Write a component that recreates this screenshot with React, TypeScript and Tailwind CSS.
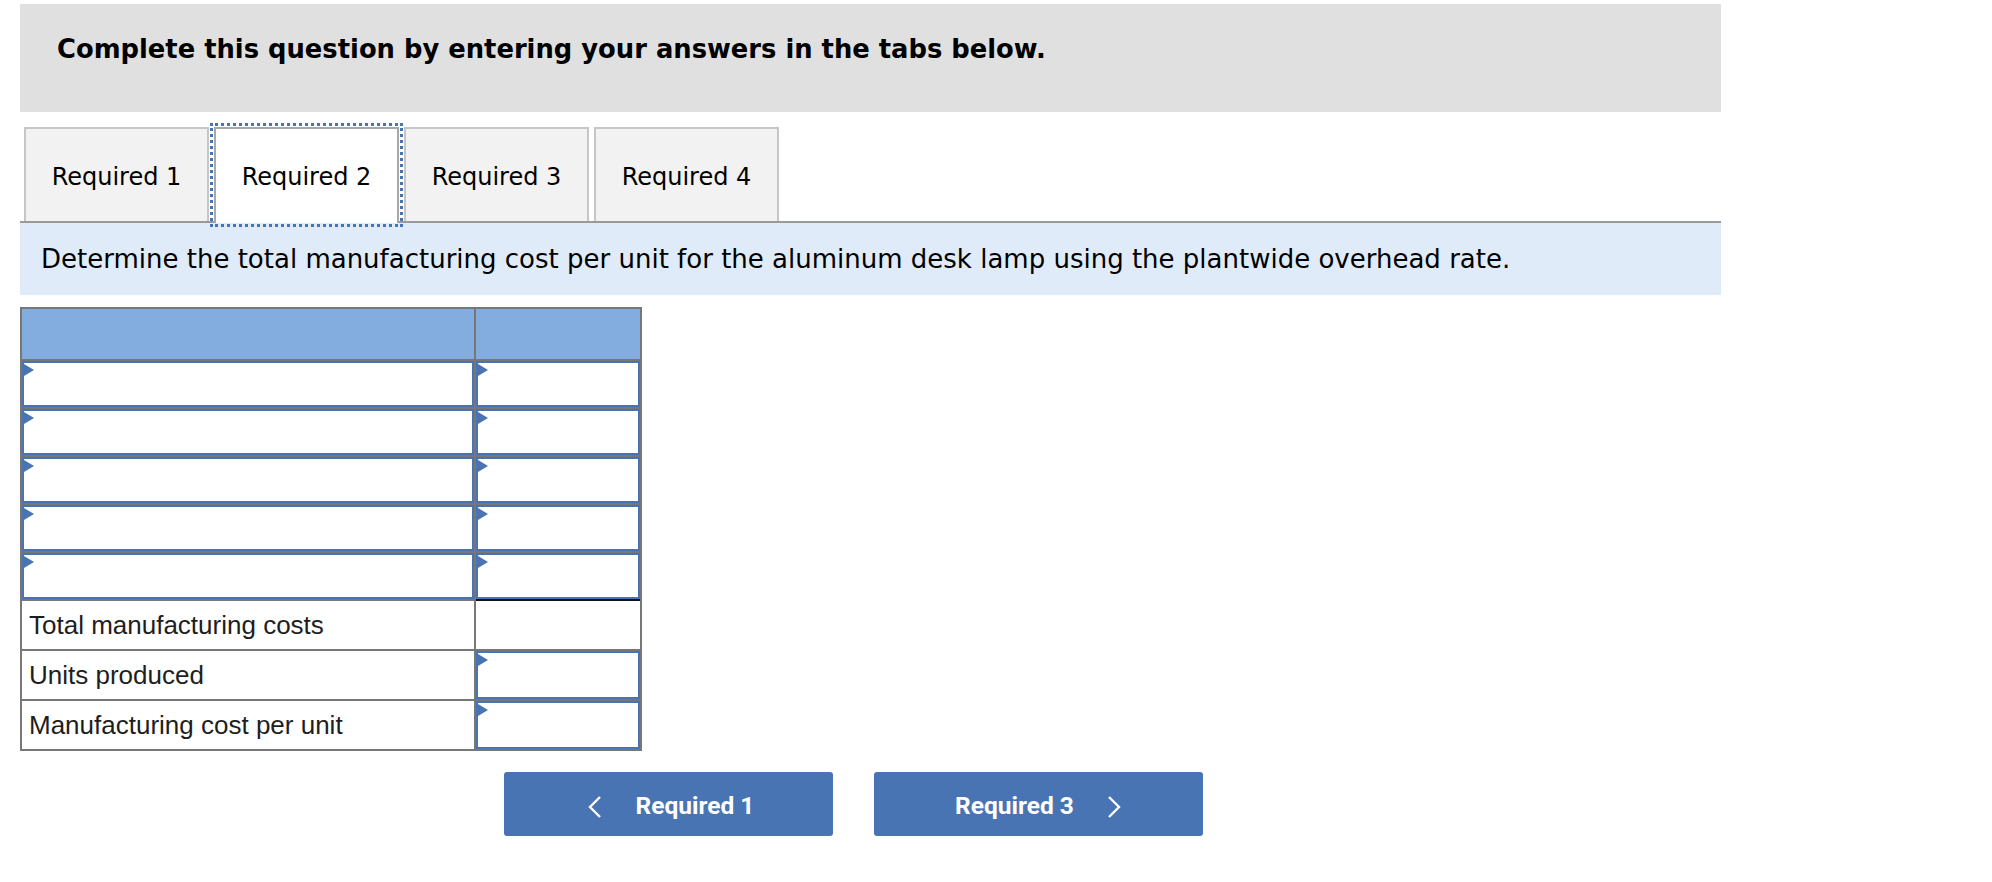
import React from 'react';

const verdana = { fontFamily: '"DejaVu Sans", Verdana, sans-serif' };

// blue input box with the small flag marker at the top-left
const InputBox = () => (
  <div className="relative h-full w-full border-2 border-[#4874B4] bg-white">
    <svg className="absolute left-0 top-[1px]" width="10" height="12" viewBox="0 0 10 12">
      <polygon points="0,0 10,6 0,12" fill="#4874B4" />
    </svg>
  </div>
);

const Tab = ({ label, active }: { label: string; active?: boolean }) => (
  <div
    className={
      active
        ? 'relative z-10 -mb-[2px] flex h-[96px] w-[185px] items-center justify-center border-x-2 border-t-2 border-[#A8A8A8] bg-white pt-[2px] text-[24px] text-black outline-[3px] outline-dotted outline-[#4874B4] outline-offset-[1px]'
        : 'flex h-[94px] w-[185px] items-center justify-center border-x-2 border-t-2 border-[#C6C6C6] bg-[#F2F2F2] pt-[4px] text-[24px] text-black'
    }
  >
    {label}
  </div>
);

const inputRows = [0, 1, 2, 3, 4];
const textRows = ['Total manufacturing costs', 'Units produced', 'Manufacturing cost per unit'];

export default function App() {
  return (
    <div className="min-h-screen bg-white" style={verdana}>
      <div className="w-[1721px] pl-[20px] pt-[4px]">
        {/* instructions */}
        <div className="h-[108px] bg-[#E0E0E0] pl-[37px] pt-[31px]">
          <p className="text-[25.8px] font-bold leading-[28px] text-black">
            Complete this question by entering your answers in the tabs below.
          </p>
        </div>

        {/* tabs */}
        <div className="mt-[15px] flex items-end gap-[5px] border-b-2 border-[#9A9A9A] pl-[4px]">
          <Tab label="Required 1" />
          <Tab label="Required 2" active />
          <Tab label="Required 3" />
          <Tab label="Required 4" />
        </div>

        {/* prompt */}
        <div className="flex h-[72px] items-center bg-[#DFEBF8] pl-[21px]">
          <p className="text-[26px] text-black">
            Determine the total manufacturing cost per unit for the aluminum desk lamp using the plantwide overhead rate.
          </p>
        </div>

        {/* worksheet */}
        <div
          className="mt-[12px] w-[622px] border-2 border-[#777777]"
          style={{ fontFamily: '"Liberation Sans", Arial, sans-serif' }}
        >
          <div className="flex h-[52px] border-b-2 border-[#777777] bg-[#83ADDE]">
            <div className="w-[454px] border-r-2 border-[#777777]" />
            <div className="flex-1" />
          </div>

          {inputRows.map((i) => (
            <div key={i} className="flex">
              <div className="h-[48px] w-[454px] border-r-2 border-b-2 border-[#777777]">
                <InputBox />
              </div>
              <div
                className={`h-[48px] flex-1 border-b-2 ${i === 4 ? 'border-[#111111]' : 'border-[#777777]'}`}
              >
                <InputBox />
              </div>
            </div>
          ))}

          {textRows.map((label, i) => (
            <div key={label} className="flex">
              <div
                className={`flex w-[454px] items-center border-r-2 border-[#777777] pl-[7px] text-[26px] text-[#1E1E1E] ${
                  i < 2 ? 'h-[50px] border-b-2' : 'h-[48px]'
                }`}
              >
                {label}
              </div>
              <div className={`flex-1 border-[#777777] ${i < 2 ? 'h-[50px] border-b-2' : 'h-[48px]'}`}>
                {i > 0 && <InputBox />}
              </div>
            </div>
          ))}
        </div>

        {/* navigation */}
        <div
          className="mt-[21px] flex gap-[41px] pl-[484px]"
          style={{ fontFamily: 'Roboto, "Liberation Sans", sans-serif' }}
        >
          <button className="flex h-[64px] w-[329px] items-center justify-center gap-[33px] rounded-[3px] bg-[#4874B4] pl-[4px] pt-[5px] text-[24.5px] font-bold text-white">
            <svg width="16" height="24" viewBox="0 0 16 24" fill="none">
              <polyline points="13,2 3,12 13,22" stroke="white" strokeWidth="2.4" />
            </svg>
            <span>Required 1</span>
          </button>
          <button className="flex h-[64px] w-[329px] items-center justify-center gap-[32px] rounded-[3px] bg-[#4874B4] pt-[5px] text-[24.5px] font-bold text-white">
            <span>Required 3</span>
            <svg width="16" height="24" viewBox="0 0 16 24" fill="none">
              <polyline points="3,2 13,12 3,22" stroke="white" strokeWidth="2.4" />
            </svg>
          </button>
        </div>
      </div>
    </div>
  );
}
